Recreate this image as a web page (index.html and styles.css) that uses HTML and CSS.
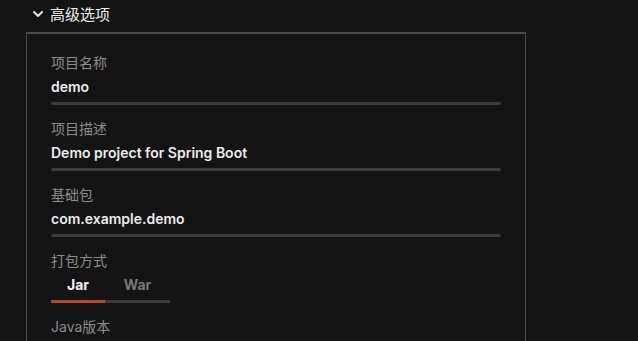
FILE: index.html
```html
<!DOCTYPE html>
<html lang="zh-CN">
<head>
  <meta charset="UTF-8">
  <title>高级选项</title>
  <link rel="stylesheet" href="styles.css">
</head>
<body>
  <div class="section-header">
    <svg class="chevron" width="12" height="8" viewBox="0 0 12 8">
      <path d="M2 2 L6 6 L10 2" fill="none" stroke="#e6e6e6" stroke-width="2" stroke-linecap="round" stroke-linejoin="round"/>
    </svg>
    <span>高级选项</span>
  </div>
  <div class="panel">
    <div class="field">
      <div class="label">项目名称</div>
      <div class="value">demo</div>
      <div class="bar"></div>
    </div>
    <div class="field">
      <div class="label">项目描述</div>
      <div class="value">Demo project for Spring Boot</div>
      <div class="bar"></div>
    </div>
    <div class="field">
      <div class="label">基础包</div>
      <div class="value">com.example.demo</div>
      <div class="bar"></div>
    </div>
    <div class="field">
      <div class="label">打包方式</div>
      <div class="tabs">
        <div class="tab active">Jar</div>
        <div class="tab war">War</div>
      </div>
    </div>
    <div class="field last">
      <div class="label">Java版本</div>
    </div>
  </div>
</body>
</html>
```

FILE: styles.css
```css
body {
  margin: 0;
  background: #141414;
  color: #e8e8e8;
  font-family: Inter, "Noto Sans CJK SC", sans-serif;
  height: 341px;
  overflow: hidden;
}

.section-header {
  display: flex;
  align-items: center;
  gap: 6px;
  height: 27px;
  margin-bottom: 5px;
  padding-left: 32px;
  font-size: 15px;
  color: #f0f0f0;
}

.chevron {
  display: block;
}

.panel {
  margin-left: 26px;
  width: 450px;
  height: 288px;
  overflow: hidden;
  border-top: 2px solid #4a4a4a;
  border-left: 1px solid #4a4a4a;
  border-right: 1px solid #4a4a4a;
  padding: 19px 24px 0 24px;
}

.field {
  margin-bottom: 14px;
}

.field.last {
  margin-bottom: 0;
}

.label {
  font-size: 14px;
  line-height: 20px;
  color: #8c8c8c;
  margin-bottom: 4px;
}

.value {
  font-size: 14px;
  line-height: 20px;
  font-weight: 600;
  color: #ececec;
}

.bar {
  height: 3px;
  margin-top: 5px;
  background: #3c3c3c;
  border-radius: 2px;
}

.tabs {
  display: flex;
}

.tab {
  font-size: 14px;
  line-height: 20px;
  font-weight: 700;
  text-align: center;
  padding-bottom: 5px;
  border-bottom: 3px solid #3c3c3c;
  color: #777777;
}

.tab.active {
  width: 54px;
  color: #f4f4f4;
  border-bottom-color: #c4461e;
}

.tab.war {
  width: 65px;
}
```
